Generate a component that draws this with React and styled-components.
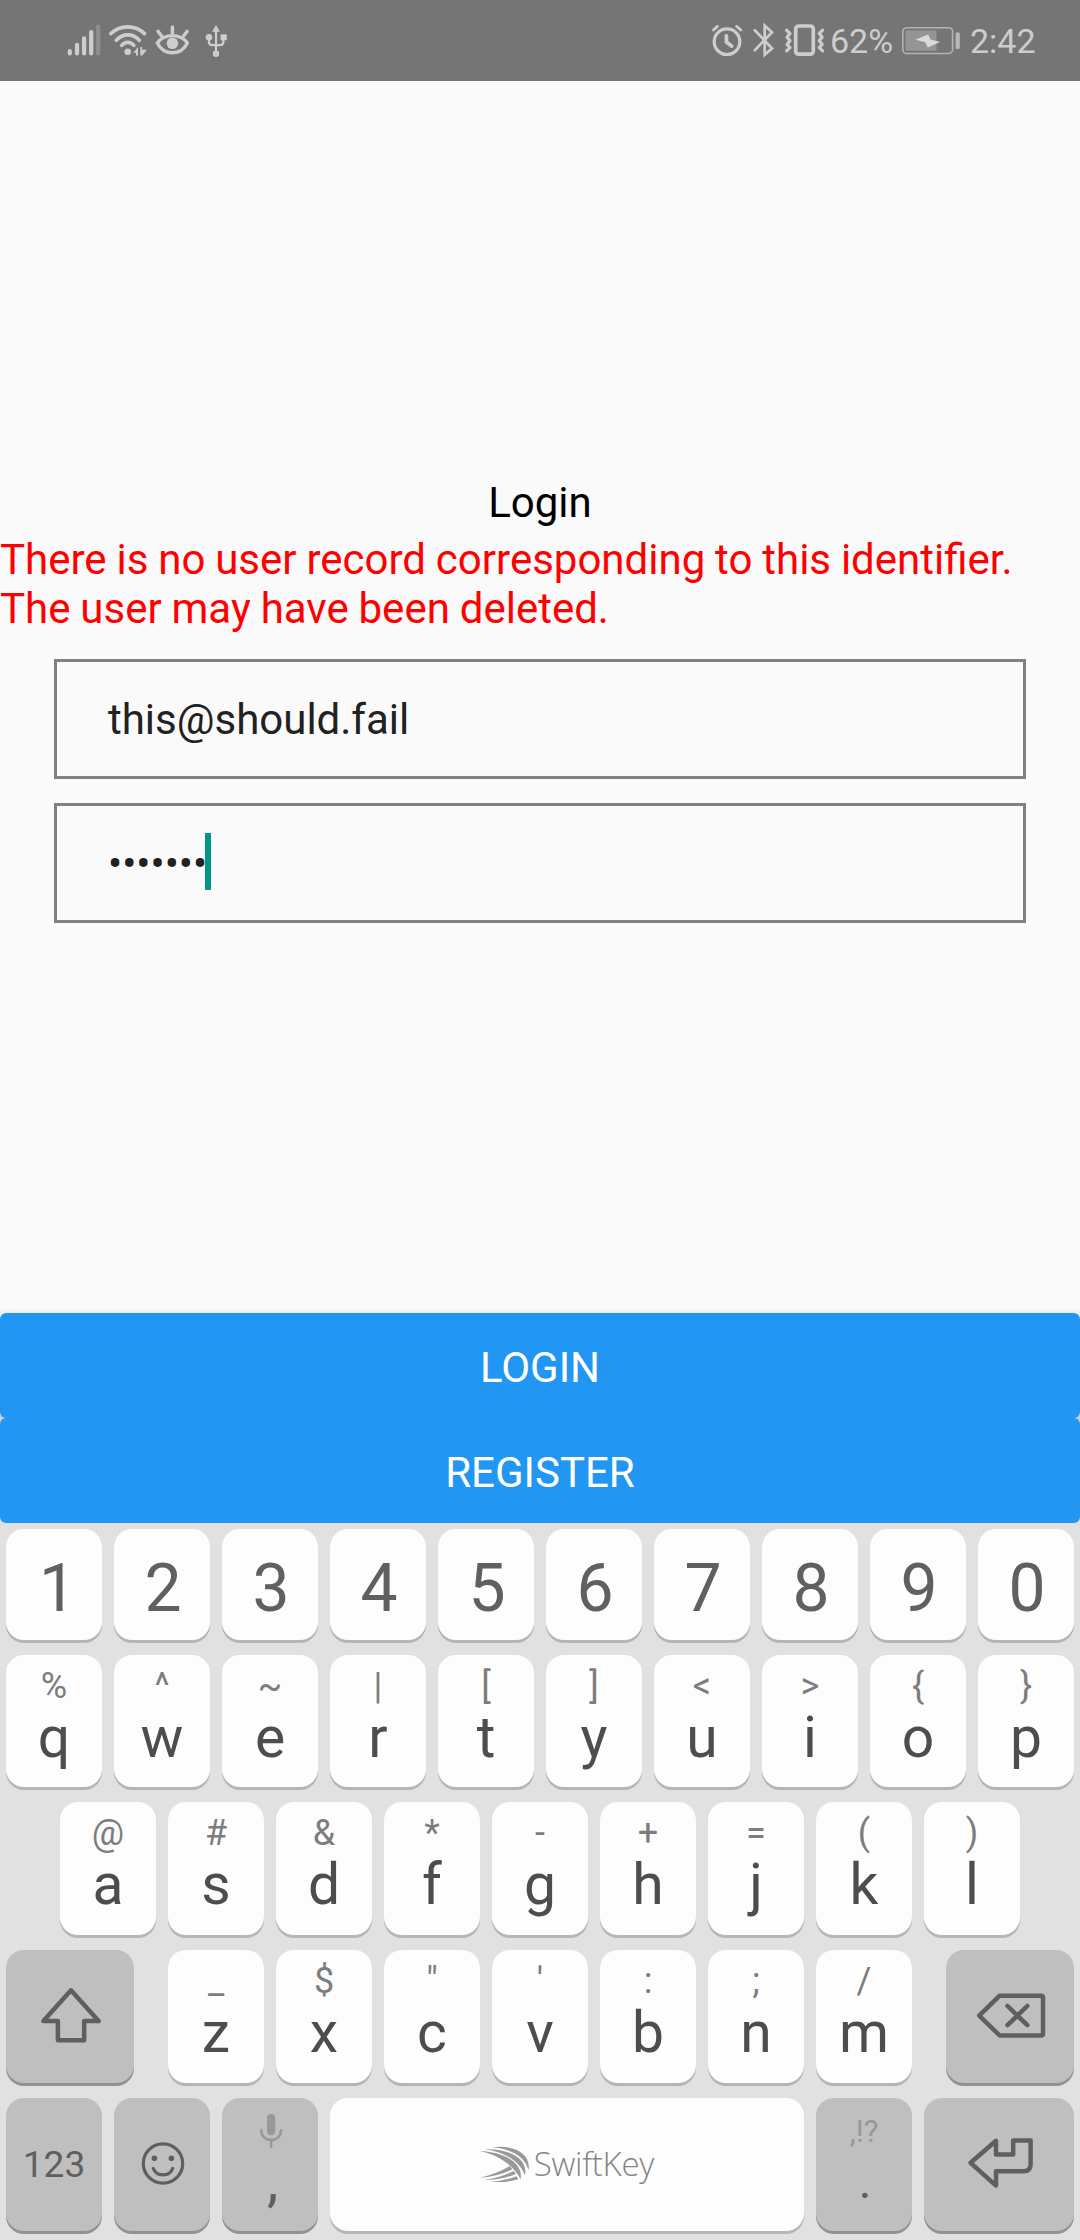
import React from "react";
import styled, { createGlobalStyle } from "styled-components";

const GlobalStyle = createGlobalStyle`
  *, *::before, *::after { box-sizing: border-box; }
  body { margin: 0; background: #fafafa; font-family: Roboto, "Liberation Sans", sans-serif; }
  button { font-family: inherit; border: 0; margin: 0; padding: 0; }
  svg { display: block; flex: none; overflow: visible; }
`;

const Screen = styled.div`
  width: 1080px;
  height: 2240px;
  display: flex;
  flex-direction: column;
  overflow: hidden;
  background: #fafafa;
`;

/* ---------- status bar ---------- */

const StatusBar = styled.header`
  height: 81px;
  flex: none;
  display: flex;
  justify-content: space-between;
  padding: 20px 44px 0 66px;
  background: #757575;
  color: #cdcdcd;
`;

const StatusGroup = styled.div`
  display: flex;
  align-items: flex-start;
`;

const StatusIcon = styled.svg`
  height: 40px;
  margin-left: ${(p) => p.$gap || 0}px;
  fill: none;
  stroke: #cdcdcd;
  stroke-linecap: round;
  stroke-linejoin: round;
`;

const StatusText = styled.span`
  width: ${(p) => p.$width}px;
  margin: 1px 0 0 ${(p) => p.$gap}px;
  font-size: 34px;
  line-height: 40px;
  white-space: nowrap;
`;

const SignalIcon = () => (
  <StatusIcon width="36" viewBox="66 20 36 40" strokeWidth="4.2">
    <path d="M69.8 51.2V53.4M77 44.8V53.4M84.1 38.4V53.4M91.2 32.2V53.4" />
    <path d="M98.2 26.5V53.4" stroke="#8f8f8f" />
  </StatusIcon>
);

const WifiIcon = () => (
  <StatusIcon $gap={6} width="40" viewBox="108 20 40 40" strokeWidth="3.7">
    <path d="M110.8 33.6C120.5 24.7 135 24.7 144.6 33.6" />
    <path d="M116.3 40.2C123 33.2 132.8 33.2 139.2 40.2" />
    <path d="M121.8 45.4C125.2 41.4 130.4 41.4 133.8 45.4" />
    <circle cx="127.7" cy="51.7" r="3.3" fill="#cdcdcd" stroke="none" />
    <path d="M133.4 52.8L138 47V55.6H136V52.8ZM140.3 47H142.2V49.7H147L142.2 55.6H140.3Z" fill="#cdcdcd" stroke="none" />
  </StatusIcon>
);

const EyeIcon = () => (
  <StatusIcon $gap={6} width="36" viewBox="154 20 36 40" strokeWidth="3.4">
    <path d="M157.3 43C160.5 38.6 166 35.6 172.4 35.6S184.2 38.6 187.4 43C184.2 49.4 178.8 52.8 172.4 52.8S160.5 49.4 157.3 43Z" />
    <circle cx="172.4" cy="43.3" r="5.8" fill="#cdcdcd" stroke="none" />
    <path d="M172.4 27V33M158 31.4L161.6 36M187 31.4L183.6 36" />
  </StatusIcon>
);

const UsbIcon = () => (
  <StatusIcon $gap={14} width="24" viewBox="204 20 24 40" strokeWidth="2.2">
    <path d="M216 30V53M209 38V42Q209 45.2 212.4 45.2H219.6Q223.4 45.2 223.4 42V38" />
    <path d="M216 25L220 31.8H212Z" fill="#cdcdcd" stroke="none" />
    <circle cx="216" cy="53.7" r="3.2" fill="#cdcdcd" stroke="none" />
    <circle cx="209" cy="37.2" r="3.3" fill="#cdcdcd" stroke="none" />
    <rect x="220.6" y="34.3" width="6.2" height="6" fill="#cdcdcd" stroke="none" />
  </StatusIcon>
);

const AlarmIcon = () => (
  <StatusIcon width="34" viewBox="710 20 34 40" strokeWidth="3.2">
    <circle cx="727" cy="41.7" r="12.8" />
    <path d="M726.4 36V42L731.6 46" strokeWidth="3.8" />
    <path d="M713.4 30L717.4 26.4M736.6 26.4L740.8 30" strokeWidth="2.8" />
  </StatusIcon>
);

const BluetoothIcon = () => (
  <StatusIcon $gap={8} width="22" viewBox="752 20 22 40" strokeWidth="2.7">
    <path d="M754.8 30.2L772 48.3L764.7 54.7V25.5L772 32.3L754.8 50.2" strokeLinejoin="miter" />
  </StatusIcon>
);

const VibrateIcon = () => (
  <StatusIcon $gap={10} width="41" viewBox="784 20 41 40" strokeWidth="3.2">
    <rect x="795.7" y="26" width="17.6" height="28.2" rx="3" strokeWidth="3.7" />
    <path d="M786.6 30.2L790 33.6L787 37.2L790 40.8L787 44.4L790 47.6L786.6 50.8" />
    <path d="M822.6 30.2L819.2 33.6L822.2 37.2L819.2 40.8L822.2 44.4L819.2 47.6L822.6 50.8" />
  </StatusIcon>
);

const BatteryIcon = () => (
  <StatusIcon width="62" viewBox="900 20 62 40">
    <rect x="902.8" y="27.7" width="49.8" height="25.8" rx="4" stroke="#b3b3b3" strokeWidth="1.6" />
    <rect x="905.5" y="30.4" width="31" height="20.3" fill="#959595" stroke="none" />
    <rect x="955.6" y="32.3" width="4.2" height="16.8" rx="1.7" fill="#b8b8b8" stroke="none" />
    <path d="M915.3 39.7L928.2 34.6L930.6 39.6L940 42L927.6 47.4L925.2 42.2Z" fill="#dadada" stroke="none" />
  </StatusIcon>
);

/* ---------- login form ---------- */

const Main = styled.main`
  flex: 1;
  display: flex;
  flex-direction: column;
  padding-top: 397px;
`;

const Title = styled.h1`
  margin: 0 0 8px;
  font-size: 42px;
  font-weight: 400;
  line-height: 49px;
  text-align: center;
  color: #000;
`;

const ErrorText = styled.p`
  margin: 0 0 26px;
  font-size: 42px;
  line-height: 49px;
  word-spacing: -0.55px;
  color: #f00;
`;

const Field = styled.div`
  height: 120px;
  margin: 0 54px 24px;
  padding: 0 51px;
  border: 3px solid #808080;
  display: flex;
  align-items: center;
  font-size: 42px;
  line-height: 49px;
  color: #212121;
`;

const Caret = styled.span`
  width: 6px;
  height: 57px;
  margin: 0 0 3px -2px;
  background: #009688;
`;

const Actions = styled.div`
  margin-top: auto;
  display: flex;
  flex-direction: column;
  background: linear-gradient(#fafafa 0 20px, #cfcfcf 20px 190px, #e1e1e1 190px);
  box-shadow: 0 -1px 5px rgba(0, 0, 0, 0.08);
`;

const ActionButton = styled.button`
  height: 105px;
  padding-top: 3px;
  border-radius: 6px;
  background: #2196f3;
  color: #fff;
  font-size: 42px;
  line-height: 49px;
  text-transform: uppercase;
`;

/* ---------- keyboard ---------- */

const Keyboard = styled.section`
  flex: none;
  height: 717px;
  padding: 6px 6px 0;
  display: flex;
  flex-direction: column;
  background: #e1e1e1;
`;

const KeyRow = styled.div`
  display: flex;
  justify-content: ${(p) => (p.$spread ? "space-between" : "center")};
  gap: 12px;
  margin-bottom: ${(p) => p.$after || 15}px;
`;

const KeyCluster = styled.div`
  display: flex;
  gap: 12px;
`;

const Key = styled.button`
  width: ${(p) => p.$width || 96}px;
  height: ${(p) => p.$height || 133}px;
  border-radius: 18px;
  display: flex;
  flex-direction: column;
  align-items: center;
  justify-content: ${(p) => (p.$centered ? "center" : "flex-start")};
  padding-top: ${(p) => (p.$centered ? 0 : 10)}px;
  background: ${(p) => (p.$dark ? "#bfbfbf" : "#fdfdfd")};
  box-shadow: 0 3px 0 ${(p) => (p.$dark ? "#929292" : "#b5b5b5")};
  color: ${(p) => (p.$dark ? "#5f5f5f" : "#4d4d4d")};
`;

const Digit = styled.span`
  padding: 9px 0 0 ${(p) => (p.$narrow ? 7 : 2)}px;
  font-size: 66px;
  line-height: 76px;
  color: #606060;
`;

const Hint = styled.span`
  height: 42px;
  font-size: 36px;
  line-height: 42px;
  color: #7d7d7d;
`;

const Letter = styled.span`
  padding: 1px 0 0 ${(p) => p.$inset || 0}px;
  font-size: 57px;
  line-height: 60px;
`;

const ModeLabel = styled.span`
  font-size: 37px;
  line-height: 44px;
`;

const PunctuationHint = styled.span`
  height: 42px;
  padding-top: 3px;
  font-size: 31px;
  line-height: 42px;
  color: #989898;
`;

const Period = styled.span`
  padding: 2px 0 0 2px;
  font-size: 48px;
  line-height: 60px;
`;

const KeyIcon = styled.svg`
  fill: none;
  stroke: #5f5f5f;
  stroke-width: 4.5;
  stroke-linecap: round;
  stroke-linejoin: round;
`;

const Brand = styled.div`
  display: flex;
  align-items: center;
  gap: 4px;
  padding-bottom: 2px;
  color: #858585;
`;

const BrandName = styled.span`
  font-family: "Open Sans", "Noto Sans", sans-serif;
  font-size: 33px;
  font-weight: 300;
  line-height: 40px;
  letter-spacing: -0.3px;
`;

const ShiftIcon = () => (
  <KeyIcon width="60" height="60">
    <path d="M31 3.3L58.6 34H44.2V53.3H17.9V34H3.4Z" />
  </KeyIcon>
);

const BackspaceIcon = () => (
  <KeyIcon width="70" height="60">
    <path d="M24.7 8.7H66Q68 8.7 68 10.7V46.5Q68 48.5 66 48.5H24.7L4.2 28.6Z" />
    <path d="M32.5 19L52.3 38.2M52.3 19L32.5 38.2" />
  </KeyIcon>
);

const SmileIcon = () => (
  <KeyIcon width="60" height="60">
    <circle cx="31" cy="28.5" r="19.7" strokeWidth="3.2" />
    <circle cx="22.4" cy="23.2" r="2.8" fill="#5f5f5f" stroke="none" />
    <circle cx="39.4" cy="23.2" r="2.8" fill="#5f5f5f" stroke="none" />
    <path d="M21.3 33.5C24.5 42 37.5 42 40.7 33.5" strokeWidth="3.2" />
  </KeyIcon>
);

const MicIcon = () => (
  <KeyIcon width="24" height="42">
    <rect x="9" y="6" width="8.2" height="21.3" rx="4.1" fill="#989898" stroke="none" />
    <path d="M3.3 22.2C3.3 35.4 22.9 35.4 22.9 22.2M13.1 32.5V38.8" stroke="#989898" strokeWidth="2.5" />
  </KeyIcon>
);

const EnterIcon = () => (
  <KeyIcon width="70" height="60">
    <path d="M6.6 27.8L32 5.8V19.6H49.2V5.5H66.6V29.3Q66.6 36.3 59.6 36.3H32V50.6Z" />
  </KeyIcon>
);

const SwiftMark = () => (
  <svg width="50" height="38" viewBox="18 24 150 114" fill="#999">
    <path d="M54 31C115 23 171 46 164 99C152 58 110 35 54 31Z" />
    <path d="M33 37C97 33 164 62 153 115C137 72 90 44 33 37Z" />
    <path d="M17 42C85 44 148 74 140 127C120 86 72 53 17 42Z" />
    <path d="M17 122Q65 112 108 87L115 97Q72 119 17 122Z" />
    <path d="M32 129Q78 122 119 102L126 110Q84 129 32 129Z" />
    <path d="M50 134Q92 131 128 118L133 127Q94 138 50 134Z" />
  </svg>
);

const digits = ["1", "2", "3", "4", "5", "6", "7", "8", "9", "0"];
const upperRow = [["%", "q"], ["^", "w"], ["~", "e"], ["|", "r"], ["[", "t"], ["]", "y"], ["<", "u"], [">", "i"], ["{", "o"], ["}", "p"]];
const homeRow = [["@", "a"], ["#", "s"], ["&", "d"], ["*", "f"], ["-", "g"], ["+", "h"], ["=", "j"], ["(", "k"], [")", "l"]];
const lowerRow = [["_", "z"], ["$", "x"], ['"', "c"], ["'", "v"], [":", "b"], [";", "n"], ["/", "m"]];

const LetterKeys = ({ keys, height }) =>
  keys.map(([hint, letter]) => (
    <Key key={letter} $height={height}>
      <Hint>{hint}</Hint>
      <Letter>{letter}</Letter>
    </Key>
  ));

export default function App() {
  return (
    <Screen>
      <GlobalStyle />
      <StatusBar>
        <StatusGroup>
          <SignalIcon />
          <WifiIcon />
          <EyeIcon />
          <UsbIcon />
        </StatusGroup>
        <StatusGroup>
          <AlarmIcon />
          <BluetoothIcon />
          <VibrateIcon />
          <StatusText $width={70} $gap={5}>62%</StatusText>
          <BatteryIcon />
          <StatusText $width={66} $gap={8}>2:42</StatusText>
        </StatusGroup>
      </StatusBar>

      <Main>
        <Title>Login</Title>
        <ErrorText>
          There is no user record corresponding to this identifier. The user may have been deleted.
        </ErrorText>
        <Field>this@should.fail</Field>
        <Field>
          •••••••
          <Caret />
        </Field>
        <Actions>
          <ActionButton>Login</ActionButton>
          <ActionButton>Register</ActionButton>
        </Actions>
      </Main>

      <Keyboard>
        <KeyRow>
          {digits.map((d) => (
            <Key key={d} $height={111} $centered>
              <Digit $narrow={d === "1"}>{d}</Digit>
            </Key>
          ))}
        </KeyRow>
        <KeyRow>
          <LetterKeys keys={upperRow} height={132} />
        </KeyRow>
        <KeyRow>
          <LetterKeys keys={homeRow} />
        </KeyRow>
        <KeyRow $spread>
          <Key $dark $centered $width={128}><ShiftIcon /></Key>
          <KeyCluster>
            <LetterKeys keys={lowerRow} />
          </KeyCluster>
          <Key $dark $centered $width={128}><BackspaceIcon /></Key>
        </KeyRow>
        <KeyRow $after={6}>
          <Key $dark $centered><ModeLabel>123</ModeLabel></Key>
          <Key $dark $centered><SmileIcon /></Key>
          <Key $dark>
            <MicIcon />
            <Letter $inset={5}>,</Letter>
          </Key>
          <Key $centered $width={474}>
            <Brand>
              <SwiftMark />
              <BrandName>SwiftKey</BrandName>
            </Brand>
          </Key>
          <Key $dark>
            <PunctuationHint>,!?</PunctuationHint>
            <Period>.</Period>
          </Key>
          <Key $dark $centered $width={150}><EnterIcon /></Key>
        </KeyRow>
      </Keyboard>
    </Screen>
  );
}
